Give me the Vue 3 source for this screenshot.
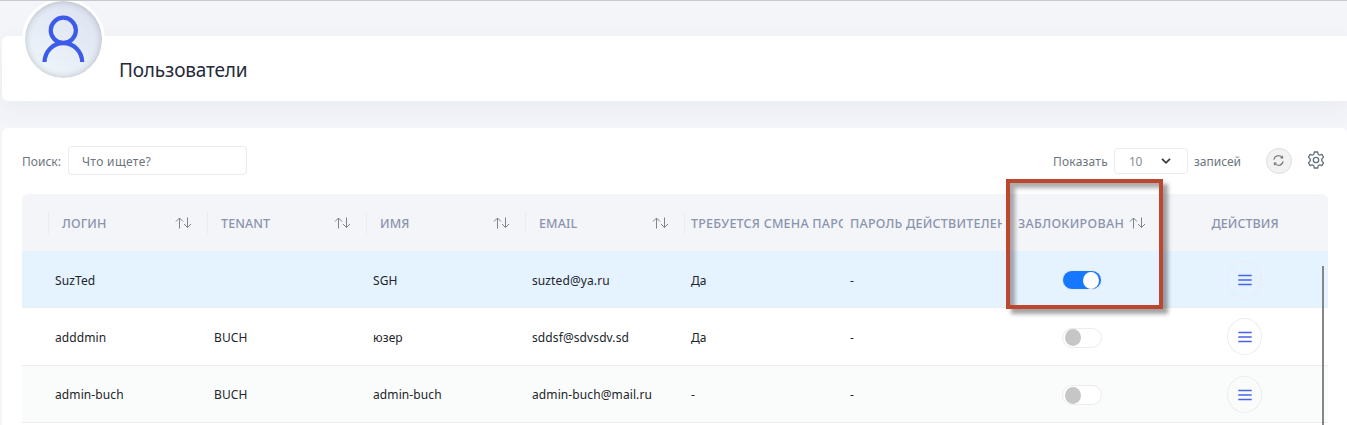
<script setup>
const columns = [
  { title: 'ЛОГИН', sort: true, cls: 'wide' },
  { title: 'TENANT', sort: true, cls: 'wide' },
  { title: 'ИМЯ', sort: true, cls: 'wide' },
  { title: 'EMAIL', sort: true, cls: 'wide' },
  { title: 'ТРЕБУЕТСЯ СМЕНА ПАРОЛЯ', cls: 'cut' },
  { title: 'ПАРОЛЬ ДЕЙСТВИТЕЛЕН ДО', cls: 'cut plain' },
  { title: 'ЗАБЛОКИРОВАН', sort: true, cls: 'plain' },
  { title: 'ДЕЙСТВИЯ', cls: 'actions plain' },
]
const users = [
  { cells: ['SuzTed', '', 'SGH', 'suzted@ya.ru', 'Да', '-'], blocked: true },
  { cells: ['adddmin', 'BUCH', 'юзер', 'sddsf@sdvsdv.sd', 'Да', '-'], blocked: false },
  { cells: ['admin-buch', 'BUCH', 'admin-buch', 'admin-buch@mail.ru', '-', '-'], blocked: false },
]
</script>

<template>
  <div class="page">
    <header class="title-card">
      <div class="avatar">
        <svg width="77" height="77" viewBox="0 0 77 77" fill="none" stroke="#3b5be8" stroke-width="4.2">
          <circle cx="38.3" cy="29.3" r="12.6" />
          <path d="M19.5 61C20 50 28 42.200 38.300 42.200S56.800 50 57.200 61" />
        </svg>
      </div>
      <h1>Пользователи</h1>
    </header>

    <main class="panel">
      <div class="toolbar">
        <label>Поиск:</label>
        <input class="search" type="text" placeholder="Что ищете?" />
        <span class="show">Показать</span>
        <div class="select">
          <span>10</span>
          <svg width="10" height="6" viewBox="0 0 10 6" fill="none" stroke="#343a40" stroke-width="1.7"><path d="M1 .8 5 4.800 9 .8" /></svg>
        </div>
        <span class="entries">записей</span>
        <button class="refresh">
          <svg width="11" height="11" viewBox="0 0 12 12" fill="none" stroke="#6b7178" stroke-width="1.1">
            <path d="M.9 5A5.200 5.200 0 0 1 10.300 3M11.100 7A5.200 5.200 0 0 1 1.700 9M10.500 .8V3.200H8.100M1.500 11.200V8.800H3.900" />
          </svg>
        </button>
        <button class="gear">
          <svg width="16" height="18" viewBox="0 0 16 18" fill="none" stroke="#667078" stroke-width="1.300" stroke-linejoin="round">
            <path d="M6.300 1h3.400l.5 2.300 1.500.9 2.200-.8 1.600 2.800-1.700 1.700v2.200l1.700 1.700-1.600 2.800-2.200-.8-1.500.9-.5 2.300H6.300l-.5-2.300-1.500-.9-2.200.8-1.600-2.800 1.700-1.700V7.900L.5 6.200l1.600-2.800 2.200.8 1.500-.9Z" />
            <circle cx="8" cy="9" r="2.700" />
          </svg>
        </button>
      </div>

      <div class="table">
        <div class="row head">
          <div class="th blank"></div>
          <div v-for="col in columns" :key="col.title" class="th" :class="col.cls">
            <span class="th-text">{{ col.title }}</span>
            <svg v-if="col.sort" class="sort" width="17" height="12" viewBox="0 0 17 12" fill="none" stroke="#7d838d" stroke-width="1">
              <path d="M4.500 11.500V1M1 4.500 4.500 1 8 4.500M12.500 .5V10.500M9 7 12.500 10.500 16 7" />
            </svg>
          </div>
        </div>
        <div v-for="(user, i) in users" :key="i" class="row body" :class="'r' + i">
          <div class="td"></div>
          <div v-for="(cell, j) in user.cells" :key="j" class="td">{{ cell }}</div>
          <div class="td center"><span class="switch" :class="{ on: user.blocked }"></span></div>
          <div class="td center">
            <button class="menu">
              <svg width="14" height="12" viewBox="0 0 14 12" stroke="#4a62ea" stroke-width="1.300"><path d="M.3 1.500h13.400M.3 6h13.400M.3 10.500h13.400" /></svg>
            </button>
          </div>
        </div>
        <div class="scrollbar"></div>
        <div class="highlight"></div>
      </div>
    </main>
  </div>
</template>

<style>
body {
  overflow: hidden;
}
</style>

<style scoped>
* {
  box-sizing: border-box;
}
.page {
  height: 425px;
  overflow: hidden;
  padding: 35px 0 0 2px;
  border-top: 1px solid #c9c9cb;
  background: #f4f5f9;
  font-family: "Noto Sans", "Open Sans", sans-serif;
  font-size: 12px;
  color: #212529;
}
.title-card {
  position: relative;
  height: 65px;
  padding-left: 117px;
  border-radius: 6px 0 0 6px;
  background: #fff;
  box-shadow: 0 8px 26px rgba(70, 80, 160, 0.06);
}
.avatar {
  position: absolute;
  left: 20px;
  top: -38px;
  width: 83px;
  height: 83px;
  border: 3px solid #fff;
  border-radius: 50%;
  background: linear-gradient(35deg, #edf5fa 15%, #dfe4f2 80%);
  box-shadow: inset 0 0 7px rgba(0, 0, 0, 0.22);
  clip-path: inset(3px 0 0 0);
}
.avatar svg {
  display: block;
}
h1 {
  margin: 0;
  padding-top: 20px;
  font-size: 19px;
  line-height: 28px;
  font-weight: 400;
  letter-spacing: -0.17px;
  color: #252b3b;
}
.panel {
  height: 310px;
  margin-top: 27px;
  padding: 18px 19px 0 20px;
  border-radius: 6px 6px 0 0;
  background: #fff;
}
.toolbar {
  display: flex;
  align-items: center;
  height: 29px;
  color: #6c757d;
}
.toolbar label,
.toolbar span {
  padding-top: 1px;
}
.search {
  width: 179px;
  height: 29px;
  margin-left: 7px;
  padding: 1px 13px 0;
  border: 1px solid #ebebed;
  border-radius: 4px;
  background: #fff;
  font: inherit;
  letter-spacing: 0.35px;
}
.search::placeholder {
  color: #6c757d;
  opacity: 1;
}
.show {
  margin-left: auto;
  letter-spacing: 0.2px;
}
.select {
  display: flex;
  align-items: center;
  justify-content: space-between;
  width: 74px;
  height: 26px;
  margin: 0 6px;
  padding: 0 16px 0 14px;
  border: 1px solid #ebebed;
  border-radius: 4px;
  color: #868e96;
}
.select span {
  letter-spacing: -0.3px;
}
.refresh {
  display: flex;
  align-items: center;
  justify-content: center;
  width: 26px;
  height: 26px;
  margin-left: 25px;
  padding: 0 1px 1px 0;
  border: 1px solid #dedede;
  border-radius: 50%;
  background: #f2f2f2;
}
.gear {
  display: flex;
  margin: -2px 4px 0 16px;
  padding: 0;
  border: 0;
  background: none;
}
.table {
  position: relative;
  width: 1306px;
  margin-top: 19px;
}
.row {
  display: grid;
  grid-template-columns: 26px repeat(7, 159px) 167px;
}
.head {
  height: 57px;
  align-items: center;
  border-radius: 6px 6px 0 0;
  background: #f4f5f9;
}
.th {
  display: flex;
  align-items: center;
  justify-content: space-between;
  height: 22px;
  padding: 0 15px 0 14px;
  border-left: 1px solid #ececef;
  font-size: 12.500px;
  font-weight: 500;
  letter-spacing: 0.1px;
  color: #8a94ad;
  white-space: nowrap;
}
.th-text {
  padding-top: 2px;
}
.th.blank,
.th.plain {
  border-color: transparent;
}
.th.wide {
  padding-left: 13px;
}
.th.cut {
  padding: 0 0 0 6px;
}
.th.cut .th-text {
  width: 152px;
  overflow: hidden;
  letter-spacing: 0.23px;
}
.th.plain:not(.cut) {
  padding-left: 15px;
  letter-spacing: 0.32px;
}
.th.plain.actions:not(.cut) {
  justify-content: center;
  padding: 0;
  letter-spacing: 0.05px;
}
.row:not(.head) {
  height: 57px;
  border-bottom: 1px solid #ececef;
}
.row.r0 {
  background: #e5f2ff;
}
.row.body.r1 {
  height: 58px;
}
.row.r2 {
  background: #fafcfb;
}
.td {
  display: flex;
  align-items: center;
  padding: 2px 0 0 7px;
  letter-spacing: 0.1px;
}
.r2 .td {
  padding-top: 0;
}
.td.center {
  justify-content: center;
  padding: 2px 0 0;
}
.switch {
  display: flex;
  align-items: center;
  width: 40px;
  height: 20px;
  padding: 0 2px;
  border: 1px solid #ececec;
  border-radius: 10px;
  background: #fff;
}
.switch::before {
  content: "";
  width: 16px;
  height: 17px;
  border-radius: 50%;
  background: #c6c6c6;
}
.switch.on {
  justify-content: flex-end;
  background: #1677ff;
}
.switch.on::before {
  background: #fff;
}
.menu {
  display: flex;
  align-items: center;
  justify-content: center;
  width: 35px;
  height: 37px;
  margin-top: -2px;
  padding: 1px 0 0;
  border: 1px solid #ececef;
  border-radius: 50%;
  background: none;
}
.scrollbar {
  position: absolute;
  left: 1300px;
  top: 72px;
  width: 2px;
  height: 160px;
  background: #868686;
}
.highlight {
  position: absolute;
  left: 984px;
  top: -15px;
  width: 157px;
  height: 130px;
  border: 4px solid #bd472e;
  box-shadow: 5px 5px 4px rgba(0, 0, 0, 0.36), inset 5px 5px 4px rgba(0, 0, 0, 0.33);
}
</style>
